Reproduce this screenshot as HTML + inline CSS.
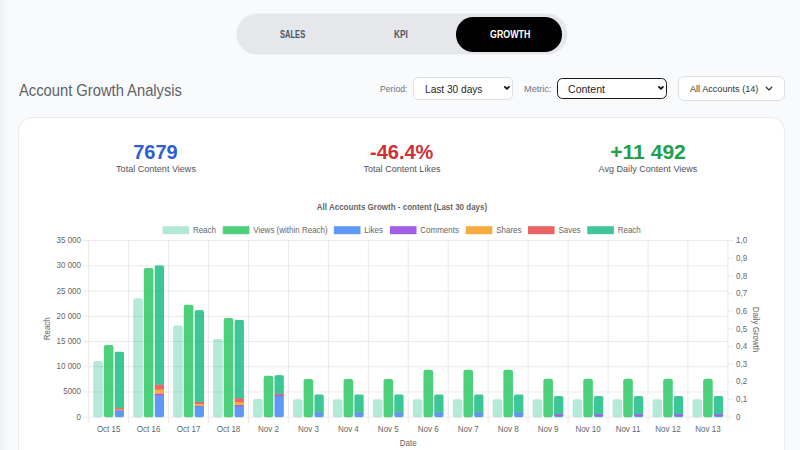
<!DOCTYPE html>
<html><head><meta charset="utf-8">
<style>
html,body{margin:0;padding:0;}
body{width:800px;height:450px;overflow:hidden;background:#f9fafb;position:relative;font-family:"Liberation Sans",sans-serif;}
.edge{position:absolute;left:0;top:0;width:8px;height:450px;background:linear-gradient(90deg,#eff1f4,#f9fafb);}
.tabs{position:absolute;left:236.8px;top:14.3px;width:330.2px;height:39.8px;border-radius:20px;background:#e5e7eb;box-shadow:0 0 0 0.8px #edeff2;}
.pill{position:absolute;left:456.3px;top:17.2px;width:106.2px;height:34.4px;border-radius:17.2px;background:#000;}
.tl{position:absolute;top:29.3px;font-size:10px;line-height:12px;font-weight:bold;color:#4b5563;white-space:nowrap;transform-origin:0 0;}
.h1{position:absolute;left:18.6px;top:80.8px;font-size:16.3px;color:#5d6168;white-space:nowrap;transform-origin:0 0;transform:scaleX(0.905);}
.lbl{position:absolute;font-size:9.3px;color:#6b7280;white-space:nowrap;}
.sel{position:absolute;box-sizing:border-box;background:#fff;border:1px solid #dcdfe4;border-radius:5px;font-size:11px;color:#262626;white-space:nowrap;}
.card{position:absolute;left:18px;top:117px;width:767px;height:400px;box-sizing:border-box;background:#fff;border:1px solid #e9ebee;border-radius:14px;}
.kv{position:absolute;width:246px;text-align:center;font-weight:bold;font-size:20px;white-space:nowrap;}
.kl{position:absolute;width:246px;text-align:center;font-size:9.2px;color:#4f545c;white-space:nowrap;transform:scaleX(0.985);}
svg{position:absolute;left:0;top:0;}
.t{font-family:"Liberation Sans",sans-serif;font-size:8.6px;fill:#666;}
.tb{font-family:"Liberation Sans",sans-serif;font-size:8.6px;font-weight:bold;fill:#666;}
</style></head><body>
<div class="edge"></div>
<div class="tabs"></div>
<div class="pill"></div>
<div class="tl" style="left:279.9px;transform:scaleX(0.755)">SALES</div>
<div class="tl" style="left:394.4px;transform:scaleX(0.83)">KPI</div>
<div class="tl" style="left:490.2px;color:#fff;transform:scaleX(0.885)">GROWTH</div>
<div class="h1">Account Growth Analysis</div>
<div class="lbl" style="left:380px;top:84px;"><span style="display:inline-block;transform-origin:0 0;transform:scaleX(0.93)">Period:</span></div>
<div class="sel" style="left:413px;top:77px;width:100px;height:23px;">
  <span style="position:absolute;left:11px;top:5px;display:inline-block;transform-origin:0 0;transform:scaleX(0.92)">Last 30 days</span>
  <svg style="left:88.9px;top:7.3px" width="8" height="6" viewBox="0 0 8 6"><path d="M1.9 1.9 L3.9 3.9 L5.9 1.9" fill="none" stroke="#111" stroke-width="1.8" stroke-linecap="round" stroke-linejoin="round"/></svg>
</div>
<div class="lbl" style="left:523.5px;top:84px;"><span style="display:inline-block;transform-origin:0 0;transform:scaleX(0.985)">Metric:</span></div>
<div class="sel" style="left:557px;top:77.6px;width:110px;height:21.4px;border:1.5px solid #1a1a1a;border-radius:5.5px;">
  <span style="position:absolute;left:10px;top:4.1px;display:inline-block;transform-origin:0 0;transform:scaleX(0.96)">Content</span>
  <svg style="left:99.3px;top:6.7px" width="8" height="6" viewBox="0 0 8 6"><path d="M1.9 1.9 L3.9 3.9 L5.9 1.9" fill="none" stroke="#111" stroke-width="1.8" stroke-linecap="round" stroke-linejoin="round"/></svg>
</div>
<div class="sel" style="left:678px;top:76px;width:107px;height:25px;border-radius:6px;font-size:9.7px;color:#333;">
  <span style="position:absolute;left:10.6px;top:5.9px;display:inline-block;transform-origin:0 0;transform:scaleX(0.94)">All Accounts (14)</span>
  <svg style="left:85.5px;top:9.2px" width="9" height="6" viewBox="0 0 9 6"><path d="M1.2 1.2 L4 4 L6.8 1.2" fill="none" stroke="#333" stroke-width="1.3" stroke-linecap="round" stroke-linejoin="round"/></svg>
</div>
<div class="card"></div>
<div class="kv" style="left:32.5px;top:140.6px;color:#2d60d6;">7679</div>
<div class="kl" style="left:32.5px;top:164px;">Total Content Views</div>
<div class="kv" style="left:278.7px;top:140.8px;color:#d0303a;">-46.4%</div>
<div class="kl" style="left:278.7px;top:164px;">Total Content Likes</div>
<div class="kv" style="left:525px;top:140.6px;color:#229f4d;transform:scaleX(1.055);">+11 492</div>
<div class="kl" style="left:525px;top:164px;">Avg Daily Content Views</div>
<svg width="800" height="450" viewBox="0 0 800 450">
<defs><clipPath id="c0"><rect x="114.53" y="351.50" width="9.59" height="65.70" rx="2.2"/></clipPath><clipPath id="c1"><rect x="154.48" y="265.29" width="9.59" height="151.91" rx="2.2"/></clipPath><clipPath id="c2"><rect x="194.43" y="310.10" width="9.59" height="107.10" rx="2.2"/></clipPath><clipPath id="c3"><rect x="234.38" y="319.70" width="9.59" height="97.50" rx="2.2"/></clipPath><clipPath id="c4"><rect x="274.33" y="375.09" width="9.59" height="42.11" rx="2.2"/></clipPath><clipPath id="c5"><rect x="314.28" y="394.34" width="9.59" height="22.86" rx="2.2"/></clipPath><clipPath id="c6"><rect x="354.23" y="394.34" width="9.59" height="22.86" rx="2.2"/></clipPath><clipPath id="c7"><rect x="394.18" y="394.34" width="9.59" height="22.86" rx="2.2"/></clipPath><clipPath id="c8"><rect x="434.13" y="394.34" width="9.59" height="22.86" rx="2.2"/></clipPath><clipPath id="c9"><rect x="474.08" y="394.34" width="9.59" height="22.86" rx="2.2"/></clipPath><clipPath id="c10"><rect x="514.03" y="394.34" width="9.59" height="22.86" rx="2.2"/></clipPath><clipPath id="c11"><rect x="553.98" y="396.00" width="9.59" height="21.20" rx="2.2"/></clipPath><clipPath id="c12"><rect x="593.93" y="396.00" width="9.59" height="21.20" rx="2.2"/></clipPath><clipPath id="c13"><rect x="633.88" y="396.00" width="9.59" height="21.20" rx="2.2"/></clipPath><clipPath id="c14"><rect x="673.83" y="396.00" width="9.59" height="21.20" rx="2.2"/></clipPath><clipPath id="c15"><rect x="713.78" y="396.00" width="9.59" height="21.20" rx="2.2"/></clipPath></defs>
<line x1="83.40" y1="240.60" x2="727.90" y2="240.60" stroke="#e4e4e4" stroke-width="0.8"/>
<text x="81" y="243.10" text-anchor="end" class="t" textLength="24.47" lengthAdjust="spacingAndGlyphs">35 000</text>
<line x1="83.40" y1="265.83" x2="727.90" y2="265.83" stroke="#e4e4e4" stroke-width="0.8"/>
<text x="81" y="268.33" text-anchor="end" class="t" textLength="24.47" lengthAdjust="spacingAndGlyphs">30 000</text>
<line x1="83.40" y1="291.06" x2="727.90" y2="291.06" stroke="#e4e4e4" stroke-width="0.8"/>
<text x="81" y="293.56" text-anchor="end" class="t" textLength="24.47" lengthAdjust="spacingAndGlyphs">25 000</text>
<line x1="83.40" y1="316.29" x2="727.90" y2="316.29" stroke="#e4e4e4" stroke-width="0.8"/>
<text x="81" y="318.79" text-anchor="end" class="t" textLength="24.47" lengthAdjust="spacingAndGlyphs">20 000</text>
<line x1="83.40" y1="341.51" x2="727.90" y2="341.51" stroke="#e4e4e4" stroke-width="0.8"/>
<text x="81" y="344.01" text-anchor="end" class="t" textLength="24.47" lengthAdjust="spacingAndGlyphs">15 000</text>
<line x1="83.40" y1="366.74" x2="727.90" y2="366.74" stroke="#e4e4e4" stroke-width="0.8"/>
<text x="81" y="369.24" text-anchor="end" class="t" textLength="24.47" lengthAdjust="spacingAndGlyphs">10 000</text>
<line x1="83.40" y1="391.97" x2="727.90" y2="391.97" stroke="#e4e4e4" stroke-width="0.8"/>
<text x="81" y="394.47" text-anchor="end" class="t" textLength="17.80" lengthAdjust="spacingAndGlyphs">5000</text>
<line x1="83.40" y1="417.20" x2="727.90" y2="417.20" stroke="#e4e4e4" stroke-width="0.8"/>
<text x="81" y="419.70" text-anchor="end" class="t" textLength="4.45" lengthAdjust="spacingAndGlyphs">0</text>
<line x1="88.70" y1="240.60" x2="88.70" y2="422.50" stroke="#e4e4e4" stroke-width="0.8"/>
<line x1="128.65" y1="240.60" x2="128.65" y2="422.50" stroke="#e4e4e4" stroke-width="0.8"/>
<line x1="168.60" y1="240.60" x2="168.60" y2="422.50" stroke="#e4e4e4" stroke-width="0.8"/>
<line x1="208.55" y1="240.60" x2="208.55" y2="422.50" stroke="#e4e4e4" stroke-width="0.8"/>
<line x1="248.50" y1="240.60" x2="248.50" y2="422.50" stroke="#e4e4e4" stroke-width="0.8"/>
<line x1="288.45" y1="240.60" x2="288.45" y2="422.50" stroke="#e4e4e4" stroke-width="0.8"/>
<line x1="328.40" y1="240.60" x2="328.40" y2="422.50" stroke="#e4e4e4" stroke-width="0.8"/>
<line x1="368.35" y1="240.60" x2="368.35" y2="422.50" stroke="#e4e4e4" stroke-width="0.8"/>
<line x1="408.30" y1="240.60" x2="408.30" y2="422.50" stroke="#e4e4e4" stroke-width="0.8"/>
<line x1="448.25" y1="240.60" x2="448.25" y2="422.50" stroke="#e4e4e4" stroke-width="0.8"/>
<line x1="488.20" y1="240.60" x2="488.20" y2="422.50" stroke="#e4e4e4" stroke-width="0.8"/>
<line x1="528.15" y1="240.60" x2="528.15" y2="422.50" stroke="#e4e4e4" stroke-width="0.8"/>
<line x1="568.10" y1="240.60" x2="568.10" y2="422.50" stroke="#e4e4e4" stroke-width="0.8"/>
<line x1="608.05" y1="240.60" x2="608.05" y2="422.50" stroke="#e4e4e4" stroke-width="0.8"/>
<line x1="648.00" y1="240.60" x2="648.00" y2="422.50" stroke="#e4e4e4" stroke-width="0.8"/>
<line x1="687.95" y1="240.60" x2="687.95" y2="422.50" stroke="#e4e4e4" stroke-width="0.8"/>
<line x1="727.90" y1="240.60" x2="727.90" y2="422.50" stroke="#e4e4e4" stroke-width="0.8"/>
<line x1="727.90" y1="417.20" x2="733.20" y2="417.20" stroke="#e4e4e4" stroke-width="0.8"/>
<text x="736" y="419.80" class="t" textLength="4.45" lengthAdjust="spacingAndGlyphs">0</text>
<line x1="727.90" y1="399.54" x2="733.20" y2="399.54" stroke="#e4e4e4" stroke-width="0.8"/>
<text x="736" y="402.14" class="t" textLength="11.12" lengthAdjust="spacingAndGlyphs">0,1</text>
<line x1="727.90" y1="381.88" x2="733.20" y2="381.88" stroke="#e4e4e4" stroke-width="0.8"/>
<text x="736" y="384.48" class="t" textLength="11.12" lengthAdjust="spacingAndGlyphs">0,2</text>
<line x1="727.90" y1="364.22" x2="733.20" y2="364.22" stroke="#e4e4e4" stroke-width="0.8"/>
<text x="736" y="366.82" class="t" textLength="11.12" lengthAdjust="spacingAndGlyphs">0,3</text>
<line x1="727.90" y1="346.56" x2="733.20" y2="346.56" stroke="#e4e4e4" stroke-width="0.8"/>
<text x="736" y="349.16" class="t" textLength="11.12" lengthAdjust="spacingAndGlyphs">0,4</text>
<line x1="727.90" y1="328.90" x2="733.20" y2="328.90" stroke="#e4e4e4" stroke-width="0.8"/>
<text x="736" y="331.50" class="t" textLength="11.12" lengthAdjust="spacingAndGlyphs">0,5</text>
<line x1="727.90" y1="311.24" x2="733.20" y2="311.24" stroke="#e4e4e4" stroke-width="0.8"/>
<text x="736" y="313.84" class="t" textLength="11.12" lengthAdjust="spacingAndGlyphs">0,6</text>
<line x1="727.90" y1="293.58" x2="733.20" y2="293.58" stroke="#e4e4e4" stroke-width="0.8"/>
<text x="736" y="296.18" class="t" textLength="11.12" lengthAdjust="spacingAndGlyphs">0,7</text>
<line x1="727.90" y1="275.92" x2="733.20" y2="275.92" stroke="#e4e4e4" stroke-width="0.8"/>
<text x="736" y="278.52" class="t" textLength="11.12" lengthAdjust="spacingAndGlyphs">0,8</text>
<line x1="727.90" y1="258.26" x2="733.20" y2="258.26" stroke="#e4e4e4" stroke-width="0.8"/>
<text x="736" y="260.86" class="t" textLength="11.12" lengthAdjust="spacingAndGlyphs">0,9</text>
<line x1="727.90" y1="240.60" x2="733.20" y2="240.60" stroke="#e4e4e4" stroke-width="0.8"/>
<text x="736" y="243.20" class="t" textLength="11.12" lengthAdjust="spacingAndGlyphs">1,0</text>
<text x="108.67" y="432.2" text-anchor="middle" class="t" textLength="23.57" lengthAdjust="spacingAndGlyphs">Oct 15</text>
<text x="148.62" y="432.2" text-anchor="middle" class="t" textLength="23.57" lengthAdjust="spacingAndGlyphs">Oct 16</text>
<text x="188.57" y="432.2" text-anchor="middle" class="t" textLength="23.57" lengthAdjust="spacingAndGlyphs">Oct 17</text>
<text x="228.52" y="432.2" text-anchor="middle" class="t" textLength="23.57" lengthAdjust="spacingAndGlyphs">Oct 18</text>
<text x="268.47" y="432.2" text-anchor="middle" class="t" textLength="20.90" lengthAdjust="spacingAndGlyphs">Nov 2</text>
<text x="308.42" y="432.2" text-anchor="middle" class="t" textLength="20.90" lengthAdjust="spacingAndGlyphs">Nov 3</text>
<text x="348.37" y="432.2" text-anchor="middle" class="t" textLength="20.90" lengthAdjust="spacingAndGlyphs">Nov 4</text>
<text x="388.32" y="432.2" text-anchor="middle" class="t" textLength="20.90" lengthAdjust="spacingAndGlyphs">Nov 5</text>
<text x="428.27" y="432.2" text-anchor="middle" class="t" textLength="20.90" lengthAdjust="spacingAndGlyphs">Nov 6</text>
<text x="468.22" y="432.2" text-anchor="middle" class="t" textLength="20.90" lengthAdjust="spacingAndGlyphs">Nov 7</text>
<text x="508.17" y="432.2" text-anchor="middle" class="t" textLength="20.90" lengthAdjust="spacingAndGlyphs">Nov 8</text>
<text x="548.12" y="432.2" text-anchor="middle" class="t" textLength="20.90" lengthAdjust="spacingAndGlyphs">Nov 9</text>
<text x="588.07" y="432.2" text-anchor="middle" class="t" textLength="25.35" lengthAdjust="spacingAndGlyphs">Nov 10</text>
<text x="628.02" y="432.2" text-anchor="middle" class="t" textLength="24.75" lengthAdjust="spacingAndGlyphs">Nov 11</text>
<text x="667.98" y="432.2" text-anchor="middle" class="t" textLength="25.35" lengthAdjust="spacingAndGlyphs">Nov 12</text>
<text x="707.92" y="432.2" text-anchor="middle" class="t" textLength="25.35" lengthAdjust="spacingAndGlyphs">Nov 13</text>
<rect x="93.23" y="360.94" width="9.59" height="56.26" rx="2.20" fill="#10b981" fill-opacity="0.31"/>
<rect x="103.88" y="345.05" width="9.59" height="72.15" rx="2.20" fill="#22c55e" fill-opacity="0.81"/>
<g clip-path="url(#c0)" opacity="0.81"><rect x="114.53" y="410.29" width="9.59" height="7.31" fill="#3b82f6"/><rect x="114.53" y="409.78" width="9.59" height="0.90" fill="#9333ea"/><rect x="114.53" y="408.87" width="9.59" height="1.31" fill="#f59e0b"/><rect x="114.53" y="407.76" width="9.59" height="1.51" fill="#e84545"/><rect x="114.53" y="351.50" width="9.59" height="56.66" fill="#10b981"/></g>
<rect x="133.18" y="298.27" width="9.59" height="118.93" rx="2.20" fill="#10b981" fill-opacity="0.31"/>
<rect x="143.83" y="268.05" width="9.59" height="149.15" rx="2.20" fill="#22c55e" fill-opacity="0.81"/>
<g clip-path="url(#c1)" opacity="0.81"><rect x="154.48" y="395.38" width="9.59" height="22.22" fill="#3b82f6"/><rect x="154.48" y="393.27" width="9.59" height="2.50" fill="#9333ea"/><rect x="154.48" y="389.32" width="9.59" height="4.35" fill="#f59e0b"/><rect x="154.48" y="384.22" width="9.59" height="5.51" fill="#e84545"/><rect x="154.48" y="265.29" width="9.59" height="119.33" fill="#10b981"/></g>
<rect x="173.13" y="325.52" width="9.59" height="91.68" rx="2.20" fill="#10b981" fill-opacity="0.31"/>
<rect x="183.78" y="304.78" width="9.59" height="112.42" rx="2.20" fill="#22c55e" fill-opacity="0.81"/>
<g clip-path="url(#c2)" opacity="0.81"><rect x="194.43" y="405.99" width="9.59" height="11.61" fill="#3b82f6"/><rect x="194.43" y="405.29" width="9.59" height="1.10" fill="#9333ea"/><rect x="194.43" y="403.59" width="9.59" height="2.10" fill="#f59e0b"/><rect x="194.43" y="401.79" width="9.59" height="2.20" fill="#e84545"/><rect x="194.43" y="310.10" width="9.59" height="92.08" fill="#10b981"/></g>
<rect x="213.08" y="339.02" width="9.59" height="78.18" rx="2.20" fill="#10b981" fill-opacity="0.31"/>
<rect x="223.73" y="317.90" width="9.59" height="99.30" rx="2.20" fill="#22c55e" fill-opacity="0.81"/>
<g clip-path="url(#c3)" opacity="0.81"><rect x="234.38" y="405.99" width="9.59" height="11.61" fill="#3b82f6"/><rect x="234.38" y="404.69" width="9.59" height="1.70" fill="#9333ea"/><rect x="234.38" y="401.79" width="9.59" height="3.30" fill="#f59e0b"/><rect x="234.38" y="397.88" width="9.59" height="4.31" fill="#e84545"/><rect x="234.38" y="319.70" width="9.59" height="78.58" fill="#10b981"/></g>
<rect x="253.03" y="398.98" width="9.59" height="18.22" rx="2.20" fill="#10b981" fill-opacity="0.31"/>
<rect x="263.68" y="375.66" width="9.59" height="41.54" rx="2.20" fill="#22c55e" fill-opacity="0.81"/>
<g clip-path="url(#c4)" opacity="0.81"><rect x="274.33" y="395.58" width="9.59" height="22.02" fill="#3b82f6"/><rect x="274.33" y="394.57" width="9.59" height="1.41" fill="#9333ea"/><rect x="274.33" y="393.31" width="9.59" height="1.66" fill="#e84545"/><rect x="274.33" y="375.09" width="9.59" height="18.62" fill="#10b981"/></g>
<rect x="292.98" y="399.14" width="9.59" height="18.06" rx="2.20" fill="#10b981" fill-opacity="0.31"/>
<rect x="303.63" y="378.95" width="9.59" height="38.25" rx="2.20" fill="#22c55e" fill-opacity="0.81"/>
<g clip-path="url(#c5)" opacity="0.81"><rect x="314.28" y="412.91" width="9.59" height="4.69" fill="#3b82f6"/><rect x="314.28" y="412.41" width="9.59" height="0.90" fill="#9333ea"/><rect x="314.28" y="394.34" width="9.59" height="18.46" fill="#10b981"/></g>
<rect x="332.93" y="399.14" width="9.59" height="18.06" rx="2.20" fill="#10b981" fill-opacity="0.31"/>
<rect x="343.58" y="378.95" width="9.59" height="38.25" rx="2.20" fill="#22c55e" fill-opacity="0.81"/>
<g clip-path="url(#c6)" opacity="0.81"><rect x="354.23" y="412.91" width="9.59" height="4.69" fill="#3b82f6"/><rect x="354.23" y="412.41" width="9.59" height="0.90" fill="#9333ea"/><rect x="354.23" y="394.34" width="9.59" height="18.46" fill="#10b981"/></g>
<rect x="372.88" y="399.14" width="9.59" height="18.06" rx="2.20" fill="#10b981" fill-opacity="0.31"/>
<rect x="383.53" y="378.95" width="9.59" height="38.25" rx="2.20" fill="#22c55e" fill-opacity="0.81"/>
<g clip-path="url(#c7)" opacity="0.81"><rect x="394.18" y="412.91" width="9.59" height="4.69" fill="#3b82f6"/><rect x="394.18" y="412.41" width="9.59" height="0.90" fill="#9333ea"/><rect x="394.18" y="394.34" width="9.59" height="18.46" fill="#10b981"/></g>
<rect x="412.83" y="399.14" width="9.59" height="18.06" rx="2.20" fill="#10b981" fill-opacity="0.31"/>
<rect x="423.48" y="369.65" width="9.59" height="47.55" rx="2.20" fill="#22c55e" fill-opacity="0.81"/>
<g clip-path="url(#c8)" opacity="0.81"><rect x="434.13" y="412.91" width="9.59" height="4.69" fill="#3b82f6"/><rect x="434.13" y="412.41" width="9.59" height="0.90" fill="#9333ea"/><rect x="434.13" y="394.34" width="9.59" height="18.46" fill="#10b981"/></g>
<rect x="452.78" y="399.14" width="9.59" height="18.06" rx="2.20" fill="#10b981" fill-opacity="0.31"/>
<rect x="463.43" y="369.65" width="9.59" height="47.55" rx="2.20" fill="#22c55e" fill-opacity="0.81"/>
<g clip-path="url(#c9)" opacity="0.81"><rect x="474.08" y="412.91" width="9.59" height="4.69" fill="#3b82f6"/><rect x="474.08" y="412.41" width="9.59" height="0.90" fill="#9333ea"/><rect x="474.08" y="394.34" width="9.59" height="18.46" fill="#10b981"/></g>
<rect x="492.73" y="399.14" width="9.59" height="18.06" rx="2.20" fill="#10b981" fill-opacity="0.31"/>
<rect x="503.38" y="369.65" width="9.59" height="47.55" rx="2.20" fill="#22c55e" fill-opacity="0.81"/>
<g clip-path="url(#c10)" opacity="0.81"><rect x="514.03" y="412.91" width="9.59" height="4.69" fill="#3b82f6"/><rect x="514.03" y="412.41" width="9.59" height="0.90" fill="#9333ea"/><rect x="514.03" y="394.34" width="9.59" height="18.46" fill="#10b981"/></g>
<rect x="532.68" y="399.28" width="9.59" height="17.92" rx="2.20" fill="#10b981" fill-opacity="0.31"/>
<rect x="543.33" y="378.85" width="9.59" height="38.35" rx="2.20" fill="#22c55e" fill-opacity="0.81"/>
<g clip-path="url(#c11)" opacity="0.81"><rect x="553.98" y="415.53" width="9.59" height="2.07" fill="#3b82f6"/><rect x="553.98" y="413.92" width="9.59" height="2.01" fill="#9333ea"/><rect x="553.98" y="396.00" width="9.59" height="18.32" fill="#10b981"/></g>
<rect x="572.63" y="399.28" width="9.59" height="17.92" rx="2.20" fill="#10b981" fill-opacity="0.31"/>
<rect x="583.28" y="378.85" width="9.59" height="38.35" rx="2.20" fill="#22c55e" fill-opacity="0.81"/>
<g clip-path="url(#c12)" opacity="0.81"><rect x="593.93" y="415.53" width="9.59" height="2.07" fill="#3b82f6"/><rect x="593.93" y="413.92" width="9.59" height="2.01" fill="#9333ea"/><rect x="593.93" y="396.00" width="9.59" height="18.32" fill="#10b981"/></g>
<rect x="612.58" y="399.28" width="9.59" height="17.92" rx="2.20" fill="#10b981" fill-opacity="0.31"/>
<rect x="623.23" y="378.85" width="9.59" height="38.35" rx="2.20" fill="#22c55e" fill-opacity="0.81"/>
<g clip-path="url(#c13)" opacity="0.81"><rect x="633.88" y="415.53" width="9.59" height="2.07" fill="#3b82f6"/><rect x="633.88" y="413.92" width="9.59" height="2.01" fill="#9333ea"/><rect x="633.88" y="396.00" width="9.59" height="18.32" fill="#10b981"/></g>
<rect x="652.53" y="399.28" width="9.59" height="17.92" rx="2.20" fill="#10b981" fill-opacity="0.31"/>
<rect x="663.18" y="378.85" width="9.59" height="38.35" rx="2.20" fill="#22c55e" fill-opacity="0.81"/>
<g clip-path="url(#c14)" opacity="0.81"><rect x="673.83" y="415.53" width="9.59" height="2.07" fill="#3b82f6"/><rect x="673.83" y="413.92" width="9.59" height="2.01" fill="#9333ea"/><rect x="673.83" y="396.00" width="9.59" height="18.32" fill="#10b981"/></g>
<rect x="692.48" y="399.28" width="9.59" height="17.92" rx="2.20" fill="#10b981" fill-opacity="0.31"/>
<rect x="703.13" y="378.85" width="9.59" height="38.35" rx="2.20" fill="#22c55e" fill-opacity="0.81"/>
<g clip-path="url(#c15)" opacity="0.81"><rect x="713.78" y="415.53" width="9.59" height="2.07" fill="#3b82f6"/><rect x="713.78" y="413.92" width="9.59" height="2.01" fill="#9333ea"/><rect x="713.78" y="396.00" width="9.59" height="18.32" fill="#10b981"/></g>
<text x="0" y="0" transform="translate(49.8 328.8) rotate(-90)" text-anchor="middle" class="t" textLength="23.12" lengthAdjust="spacingAndGlyphs">Reach</text>
<text x="0" y="0" transform="translate(752.6 329.6) rotate(90)" text-anchor="middle" class="t" textLength="45.79" lengthAdjust="spacingAndGlyphs">Daily Growth</text>
<text x="408.3" y="446.1" text-anchor="middle" class="t" textLength="16.90" lengthAdjust="spacingAndGlyphs">Date</text>
<text x="402" y="210.4" text-anchor="middle" class="tb" textLength="170.39" lengthAdjust="spacingAndGlyphs">All Accounts Growth - content (Last 30 days)</text>
<rect x="162.50" y="226.2" width="26.6" height="8" fill="#b4e8d6"/>
<text x="192.90" y="232.5" class="t" textLength="23.12" lengthAdjust="spacingAndGlyphs">Reach</text>
<rect x="222.80" y="226.2" width="26.6" height="8" fill="#4ecf7c"/>
<text x="253.20" y="232.5" class="t" textLength="74.55" lengthAdjust="spacingAndGlyphs">Views (within Reach)</text>
<rect x="333.90" y="226.2" width="26.6" height="8" fill="#619af5"/>
<text x="364.30" y="232.5" class="t" textLength="18.68" lengthAdjust="spacingAndGlyphs">Likes</text>
<rect x="389.90" y="226.2" width="26.6" height="8" fill="#a05ee8"/>
<text x="420.30" y="232.5" class="t" textLength="38.68" lengthAdjust="spacingAndGlyphs">Comments</text>
<rect x="465.80" y="226.2" width="26.6" height="8" fill="#f5ad3f"/>
<text x="496.20" y="232.5" class="t" textLength="25.35" lengthAdjust="spacingAndGlyphs">Shares</text>
<rect x="528.00" y="226.2" width="26.6" height="8" fill="#eb6464"/>
<text x="558.40" y="232.5" class="t" textLength="22.23" lengthAdjust="spacingAndGlyphs">Saves</text>
<rect x="587.30" y="226.2" width="26.6" height="8" fill="#41c69b"/>
<text x="617.70" y="232.5" class="t" textLength="23.12" lengthAdjust="spacingAndGlyphs">Reach</text>
</svg>
</body></html>
